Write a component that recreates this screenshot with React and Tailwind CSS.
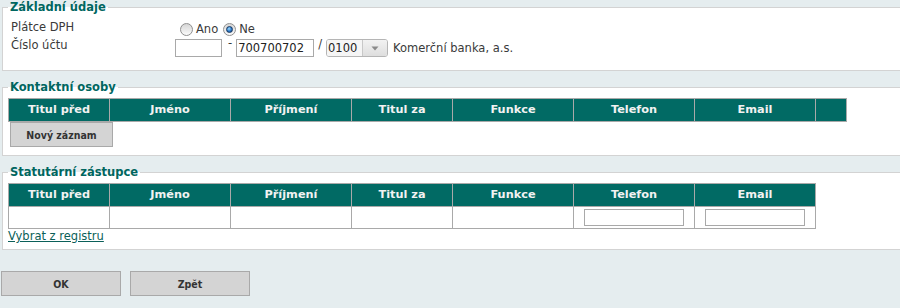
import React from "react";

const cols = [
  ["Titul před", 101],
  ["Jméno", 121],
  ["Příjmení", 121],
  ["Titul za", 101],
  ["Funkce", 121],
  ["Telefon", 121],
  ["Email", 121],
];

function Radio({ checked }) {
  return (
    <span className="mt-[3px] ml-[5px] mr-[3px] flex h-[13px] w-[13px] shrink-0 items-center justify-center rounded-full border border-[#8f8f8f] bg-[linear-gradient(#d6d6d6,#fbfbfb)]">
      {checked && (
        <span className="h-[7px] w-[7px] rounded-full border border-[#17365f] bg-[radial-gradient(circle_at_40%_35%,#9fdcff,#2a78c8_55%,#0d3f7e)]" />
      )}
    </span>
  );
}

function Legend({ children }) {
  return (
    <legend className="px-[2px] text-[11.5px] font-bold leading-[14px] text-[#00665f]">
      {children}
    </legend>
  );
}

function HeaderRow({ extra }) {
  return (
    <div className="flex">
      {cols.map(([t, w]) => (
        <div
          key={t}
          style={{ width: w }}
          className="flex h-[23px] items-center justify-center border-r border-b border-[#a9a9a9] bg-[#016a64] text-[11.3px] font-bold text-[#f2f2f2]"
        >
          {t}
        </div>
      ))}
      {extra && (
        <div className="h-[23px] w-[31px] border-r border-b border-[#a9a9a9] bg-[#016a64]" />
      )}
    </div>
  );
}

function Btn({ children, className }) {
  return (
    <button
      className={
        "flex h-[25px] items-center justify-center border border-[#a9a9a9] bg-[#d4d4d4] font-['DejaVu_Sans_Condensed','DejaVu_Sans',sans-serif] text-[10.5px] font-bold text-[#333] " +
        className
      }
    >
      {children}
    </button>
  );
}

export default function App() {
  return (
    <div className="h-[308px] w-[900px] overflow-hidden bg-[#e5edef] font-['DejaVu_Sans',Verdana,sans-serif] text-[11.5px] leading-[14px] text-[#3a3a3a]">
      {/* Základní údaje */}
      <fieldset className="ml-[2px] w-[900px] border border-[#d3d3d3] bg-white pt-[6px] pb-[13px] pl-[5px]">
        <Legend>Základní údaje</Legend>
        <div className="flex h-[14px] items-start pl-[3px]">
          <div className="w-[164px]">Plátce DPH</div>
          <div className="flex items-start">
            <Radio />
            <span className="mt-[2px]">Ano</span>
            <Radio checked />
            <span className="mt-[2px]">Ne</span>
          </div>
        </div>
        <div className="mt-[4px] flex items-start pl-[3px]">
          <div className="w-[164px]">Číslo účtu</div>
          <div className="flex items-start">
            <input
              readOnly
              value=""
              className="mt-[1px] h-[18px] w-[47px] border border-[#a9a9a9] bg-white px-[1px] text-[11.5px] leading-[14px] outline-none"
            />
            <span className="ml-[6px] mr-[4px] -mt-[2px]">-</span>
            <input
              readOnly
              value="700700702"
              className="mt-[1px] h-[18px] w-[78px] border border-[#a9a9a9] bg-white px-[1px] text-[11.5px] leading-[14px] text-[#222] outline-none"
            />
            <span className="ml-[4px] mr-[4px] -mt-[1px]">/</span>
            <div className="mt-[1px] flex h-[18px] w-[62px] overflow-hidden rounded-[3px] border border-[#b5b5b5]">
              <div className="flex w-[36px] items-center border-r border-[#c8c8c8] bg-[#f5f5f5] pl-[1px] text-[#222]">
                0100
              </div>
              <div className="flex flex-1 items-center justify-center bg-[linear-gradient(#f2f2f2,#dedede)]">
                <svg width="8" height="5" viewBox="0 0 8 5">
                  <path d="M0.5 0.5 L7.5 0.5 L4 4.5 Z" fill="#8a8a8a" />
                </svg>
              </div>
            </div>
            <span className="ml-[5px] mt-[3px]">Komerční banka, a.s.</span>
          </div>
        </div>
      </fieldset>

      {/* Kontaktní osoby */}
      <fieldset className="mt-[9px] ml-[2px] w-[900px] border border-[#d3d3d3] bg-white pt-[4px] pb-[8px] pl-[5px]">
        <Legend>Kontaktní osoby</Legend>
        <div className="w-fit border-t border-l border-[#a9a9a9]">
          <HeaderRow extra />
        </div>
        <Btn className="ml-[2px] w-[103px]">Nový záznam</Btn>
      </fieldset>

      {/* Statutární zástupce */}
      <fieldset className="mt-[9px] ml-[2px] w-[900px] border border-[#d3d3d3] bg-white pt-[4px] pb-[6px] pl-[5px]">
        <Legend>Statutární zástupce</Legend>
        <div className="w-fit border-t border-l border-[#a9a9a9]">
          <HeaderRow />
          <div className="flex">
            {cols.map(([t, w]) => (
              <div
                key={t}
                style={{ width: w }}
                className="h-[22px] border-r border-b border-[#a9a9a9] bg-white"
              >
                {(t === "Telefon" || t === "Email") && (
                  <input
                    readOnly
                    value=""
                    className="mt-[2px] ml-[10px] h-[17px] w-[100px] border border-[#a9a9a9] bg-white outline-none"
                  />
                )}
              </div>
            ))}
          </div>
        </div>
        <a href="#" className="block w-fit text-[#0b5f59] underline">
          Vybrat z registru
        </a>
      </fieldset>

      <div className="mt-[21px] ml-[1px] flex gap-[9px]">
        <Btn className="w-[120px]">OK</Btn>
        <Btn className="w-[120px]">Zpět</Btn>
      </div>
    </div>
  );
}
